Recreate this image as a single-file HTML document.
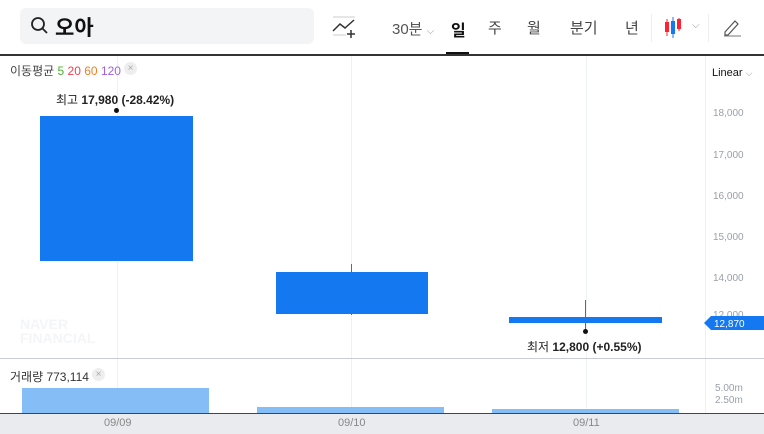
<!DOCTYPE html><html><head><meta charset="utf-8"><style>
body{margin:0;width:764px;height:433px;overflow:hidden;background:#fff;font-family:"Liberation Sans","Noto Sans CJK KR",sans-serif;position:relative}
.a{position:absolute}
.ax{font-size:10px;color:#9aa0a8;left:713px}
</style></head><body>
<div class="a" style="left:20px;top:8px;width:294px;height:36px;background:#f3f4f6;border-radius:6px"></div>
<svg class="a" style="left:30px;top:16px" width="20" height="20"><circle cx="8" cy="8" r="6" fill="none" stroke="#222" stroke-width="1.8"/><line x1="12.5" y1="12.5" x2="17" y2="17" stroke="#222" stroke-width="1.8"/></svg>
<div class="a" style="left:55px;top:12px;font-size:21px;font-weight:bold;color:#111">오아</div>
<svg class="a" style="left:332px;top:16px" width="26" height="22"><line x1="1" y1="1" x2="23" y2="1" stroke="#ccc"/><polyline points="1,15 8,8 13,12 22,4" fill="none" stroke="#333" stroke-width="1.5"/><line x1="1" y1="19" x2="14" y2="19" stroke="#ccc"/><path d="M19 14v8M15 18h8" stroke="#333" stroke-width="1.5"/></svg>
<div class="a" style="left:392px;top:18px;font-size:15px;color:#555">30분 <span style="font-size:10px;color:#999">⌵</span></div>
<div class="a" style="left:451px;top:17px;font-size:16px;font-weight:bold;color:#111">일</div>
<div class="a" style="left:446px;top:52px;width:23px;height:4px;background:#111"></div>
<div class="a" style="left:488px;top:17px;font-size:15px;color:#444">주</div>
<div class="a" style="left:527px;top:17px;font-size:15px;color:#444">월</div>
<div class="a" style="left:570px;top:17px;font-size:15px;color:#444">분기</div>
<div class="a" style="left:625px;top:17px;font-size:15px;color:#444">년</div>
<div class="a" style="left:651px;top:14px;width:1px;height:28px;background:#eee"></div>
<svg class="a" style="left:663px;top:16px" width="28" height="24"><rect x="2" y="6" width="4" height="10" fill="#f23"/><line x1="4" y1="3" x2="4" y2="20" stroke="#f23"/><rect x="8" y="5" width="4" height="13" fill="#1478f0"/><line x1="10" y1="1" x2="10" y2="22" stroke="#1478f0"/><rect x="14" y="3" width="4" height="10" fill="#f23"/><line x1="16" y1="2" x2="16" y2="15" stroke="#f23"/></svg>
<div class="a" style="left:692px;top:20px;font-size:10px;color:#999">⌵</div>
<div class="a" style="left:708px;top:14px;width:1px;height:28px;background:#eee"></div>
<svg class="a" style="left:722px;top:17px" width="20" height="20"><path d="M3 15l10-11 3 3-10 11H3z" fill="none" stroke="#555" stroke-width="1.2"/><line x1="2" y1="19" x2="19" y2="19" stroke="#777"/></svg>
<div class="a" style="left:0;top:54px;width:764px;height:2px;background:#333"></div>
<div class="a" style="left:705px;top:56px;width:1px;height:357px;background:#eef0f3"></div>
<div class="a" style="left:117px;top:56px;width:1px;height:357px;background:#eef1f5"></div>
<div class="a" style="left:351px;top:56px;width:1px;height:357px;background:#eef1f5"></div>
<div class="a" style="left:586px;top:56px;width:1px;height:357px;background:#eef1f5"></div>
<div class="a" style="left:10px;top:62px;font-size:12px;color:#444">이동평균 <span style="color:#4cb030">5</span> <span style="color:#f04050">20</span> <span style="color:#f08020">60</span> <span style="color:#a060e0">120</span></div>
<div class="a" style="left:124px;top:62px;width:13px;height:13px;border-radius:7px;background:#eee;color:#aaa;font-size:10px;text-align:center;line-height:13px">×</div>
<div class="a" style="left:712px;top:67px;font-size:11px;color:#111">Linear <span style="color:#999;font-size:9px">⌵</span></div>
<div class="a ax" style="top:108px">18,000</div>
<div class="a ax" style="top:150px">17,000</div>
<div class="a ax" style="top:191px">16,000</div>
<div class="a ax" style="top:232px">15,000</div>
<div class="a ax" style="top:273px">14,000</div>
<div class="a ax" style="top:310px">12,000</div>
<svg class="a" style="left:704px;top:315px" width="60" height="16"><path d="M0 8L7 1H60V15H7Z" fill="#1478f0"/><text x="10" y="12" font-size="10" fill="#fff" font-family="Liberation Sans">12,870</text></svg>
<div class="a" style="left:56px;top:91px;font-size:12px;color:#222">최고 <b>17,980 (-28.42%)</b></div>
<div class="a" style="left:114px;top:108px;width:5px;height:5px;border-radius:3px;background:#111"></div>
<div class="a" style="left:40px;top:116px;width:153px;height:145px;background:#1478f0"></div>
<div class="a" style="left:351px;top:264px;width:1px;height:51px;background:#1478f0"></div>
<div class="a" style="left:276px;top:272px;width:152px;height:42px;background:#1478f0"></div>
<div class="a" style="left:585px;top:300px;width:1px;height:30px;background:#1478f0"></div>
<div class="a" style="left:509px;top:317px;width:153px;height:6px;background:#1478f0"></div>
<div class="a" style="left:583px;top:329px;width:5px;height:5px;border-radius:3px;background:#111"></div>
<div class="a" style="left:527px;top:338px;font-size:12px;color:#222">최저 <b>12,800 (+0.55%)</b></div>
<div class="a" style="left:20px;top:317px;font-size:14px;font-weight:900;color:#f4f5f7;line-height:14px">NAVER<br>FINANCIAL</div>
<div class="a" style="left:0;top:358px;width:764px;height:1px;background:#c8ccd4"></div>
<div class="a" style="left:10px;top:368px;font-size:12px;color:#333">거래량 773,114</div>
<div class="a" style="left:92px;top:368px;width:13px;height:13px;border-radius:7px;background:#eee;color:#aaa;font-size:10px;text-align:center;line-height:13px">×</div>
<div class="a ax" style="top:383px;left:715px">5.00m</div>
<div class="a ax" style="top:395px;left:715px">2.50m</div>
<div class="a" style="left:22px;top:388px;width:187px;height:25px;background:#85bdf7"></div>
<div class="a" style="left:257px;top:407px;width:187px;height:6px;background:#85bdf7"></div>
<div class="a" style="left:492px;top:409px;width:187px;height:4px;background:#85bdf7"></div>
<div class="a" style="left:0;top:413px;width:764px;height:20px;background:#e9ebef;border-top:1px solid #444"></div>
<div class="a" style="left:104px;top:417px;font-size:11px;color:#888">09/09</div>
<div class="a" style="left:338px;top:417px;font-size:11px;color:#888">09/10</div>
<div class="a" style="left:573px;top:417px;font-size:11px;color:#888">09/11</div>
</body></html>
